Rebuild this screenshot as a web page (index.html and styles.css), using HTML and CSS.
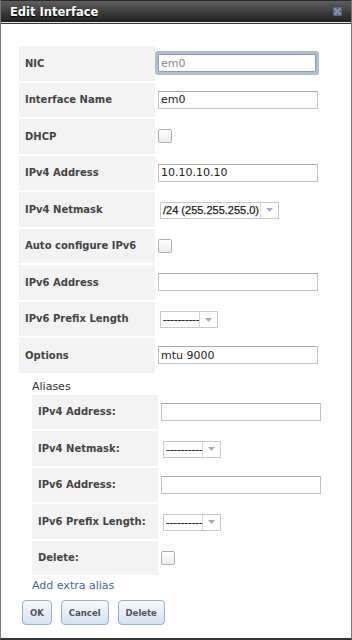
FILE: index.html
```html
<!DOCTYPE html>
<html lang="en">
<head>
    <meta charset="UTF-8">
    <meta name="viewport" content="width=device-width, initial-scale=1.0">
    <title>Edit Interface</title>
    <link rel="stylesheet" href="styles.css">
</head>
<body>
    <div class="dialog">
        <div class="titlebar">
            <span class="title">Edit Interface</span>
            <span class="close">
                <svg width="9" height="9" viewBox="0 0 9 9">
                    <rect x="0" y="0" width="9" height="9" rx="1" fill="#56657a"/>
                    <path d="M1.5 1.5 L7.5 7.5 M7.5 1.5 L1.5 7.5" stroke="#8396b0" stroke-width="2"/>
                </svg>
            </span>
        </div>

        <div class="content">
            <table class="form-table">
                <tr>
                    <th>NIC</th>
                    <td><input class="text nic" type="text" value="em0" readonly></td>
                </tr>
                <tr>
                    <th>Interface Name</th>
                    <td><input class="text" type="text" value="em0"></td>
                </tr>
                <tr>
                    <th>DHCP</th>
                    <td><input class="check" type="checkbox"></td>
                </tr>
                <tr>
                    <th>IPv4 Address</th>
                    <td><input class="text" type="text" value="10.10.10.10"></td>
                </tr>
                <tr>
                    <th>IPv4 Netmask</th>
                    <td>
                        <span class="select">
                            <span class="select-value wide">/24 (255.255.255.0)</span>
                            <span class="select-arrow"><svg width="7" height="4" viewBox="0 0 7 4"><path d="M0 0 H7 L3.5 4 Z" fill="#9badc8"/></svg></span>
                        </span>
                    </td>
                </tr>
                <tr>
                    <th>Auto configure IPv6</th>
                    <td><input class="check" type="checkbox"></td>
                </tr>
                <tr>
                    <th>IPv6 Address</th>
                    <td><input class="text" type="text" value=""></td>
                </tr>
                <tr>
                    <th>IPv6 Prefix Length</th>
                    <td>
                        <span class="select">
                            <span class="select-value narrow">----------</span>
                            <span class="select-arrow"><svg width="7" height="4" viewBox="0 0 7 4"><path d="M0 0 H7 L3.5 4 Z" fill="#9badc8"/></svg></span>
                        </span>
                    </td>
                </tr>
                <tr>
                    <th>Options</th>
                    <td><input class="text" type="text" value="mtu 9000"></td>
                </tr>
            </table>

            <div class="aliases">
                <div class="aliases-title">Aliases</div>
                <table class="form-table alias-table">
                    <tr>
                        <th>IPv4 Address:</th>
                        <td><input class="text" type="text" value=""></td>
                    </tr>
                    <tr>
                        <th>IPv4 Netmask:</th>
                        <td>
                            <span class="select">
                                <span class="select-value narrow">----------</span>
                                <span class="select-arrow"><svg width="7" height="4" viewBox="0 0 7 4"><path d="M0 0 H7 L3.5 4 Z" fill="#9badc8"/></svg></span>
                            </span>
                        </td>
                    </tr>
                    <tr>
                        <th>IPv6 Address:</th>
                        <td><input class="text" type="text" value=""></td>
                    </tr>
                    <tr>
                        <th>IPv6 Prefix Length:</th>
                        <td>
                            <span class="select">
                                <span class="select-value narrow">----------</span>
                                <span class="select-arrow"><svg width="7" height="4" viewBox="0 0 7 4"><path d="M0 0 H7 L3.5 4 Z" fill="#9badc8"/></svg></span>
                            </span>
                        </td>
                    </tr>
                    <tr>
                        <th>Delete:</th>
                        <td><input class="check" type="checkbox"></td>
                    </tr>
                </table>
                <a class="add-alias" href="#">Add extra alias</a>
            </div>

            <div class="buttons">
                <button type="button">OK</button>
                <button type="button">Cancel</button>
                <button type="button">Delete</button>
            </div>
        </div>
    </div>
</body>
</html>
```

FILE: styles.css
```css
body {
    margin: 0;
    background-color: #fff;
    font-family: "DejaVu Sans", Verdana, sans-serif;
}
.dialog {
    width: 352px;
    height: 640px;
    box-sizing: border-box;
    border-left: 1px solid #777;
    border-right: 1px solid #777;
    border-bottom: 2px solid #333;
    overflow: hidden;
}

/* title bar */
.titlebar {
    height: 23px;
    box-sizing: border-box;
    border-top: 1px solid #2a2a2a;
    border-bottom: 1px solid #e6e6e6;
    background: linear-gradient(#5e5e5e, #1f1f1f);
    display: flex;
    justify-content: space-between;
    padding: 0 9px 0 9px;
}
.title {
    color: #fff;
    font-size: 11.5px;
    font-weight: bold;
    line-height: 21px;
    padding-top: 1px;
    text-shadow: 0 1px 1px #000;
}
.close {
    display: block;
    margin-top: 6px;
    line-height: 0;
}
.content {
    border-top: 1px solid #333;
}

/* form table */
.form-table {
    border-spacing: 2px;
    margin: 20px 0 0 16px;
}
.form-table th {
    width: 124px;
    height: 34.5px;
    padding: 0 6px;
    text-align: left;
    font-size: 10px;
    font-weight: bold;
    color: #444;
    background-color: #f3f3f3;
    white-space: nowrap;
}
.form-table td {
    padding: 0 0 0 1px;
    vertical-align: middle;
}
.text {
    display: block;
    width: 160px;
    height: 18px;
    box-sizing: border-box;
    margin: 0;
    padding: 0 2px;
    border: 1px solid #c4c4c4;
    border-top-color: #aaa;
    font-family: "DejaVu Sans", Verdana, sans-serif;
    font-size: 11px;
    color: #222;
    outline: none;
}
.text.nic {
    width: 158px;
    color: #888;
    border-color: #8d9db3;
    box-shadow: 0 0 0 3px #aebdd0;
    border-radius: 1px;
}
.check {
    display: block;
    appearance: none;
    width: 14px;
    height: 14px;
    margin: 0;
    box-sizing: border-box;
    border: 1px solid #b0b0b0;
    border-radius: 2px;
    background: linear-gradient(#fff, #ececec);
}

/* select */
.select {
    display: inline-flex;
    vertical-align: middle;
    height: 17px;
    box-sizing: border-box;
    margin-left: 2px;
    border: 1px solid #c9c9c9;
    background-color: #fff;
}
.select-value {
    box-sizing: border-box;
    padding-left: 2px;
    font-family: "Liberation Sans", Arial, sans-serif;
    font-size: 11px;
    line-height: 15px;
    color: #222;
    white-space: nowrap;
    overflow: hidden;
    -webkit-text-stroke: 0.25px #222;
}
.select-value.wide {
    width: 99px;
}
.select-value.narrow {
    width: 38px;
}
.select-arrow {
    width: 17px;
    border-left: 1px solid #d6d6d6;
    display: flex;
    align-items: center;
    justify-content: center;
}

/* aliases */
.aliases {
    padding-left: 31px;
}
.aliases-title {
    margin-top: 5px;
    font-size: 11px;
    line-height: 13px;
    color: #333;
}
.alias-table {
    margin: 0 0 0 -2px;
}
.alias-table th {
    width: 114px;
}
.alias-table td .select {
    margin-left: 2px;
}
.add-alias {
    display: block;
    margin-top: 2px;
    font-size: 11px;
    line-height: 13px;
    color: #3f6aa6;
    text-decoration: none;
}

/* buttons */
.buttons {
    display: flex;
    gap: 9px;
    margin: 8px 0 0 21px;
}
.buttons button {
    height: 25px;
    padding: 0 7px;
    border: 1px solid #96b0d2;
    border-radius: 4px;
    background: linear-gradient(#f6f9fd, #d3e3f4);
    font-family: "DejaVu Sans", Verdana, sans-serif;
    font-size: 8.5px;
    font-weight: bold;
    color: #555;
    cursor: pointer;
}
```
